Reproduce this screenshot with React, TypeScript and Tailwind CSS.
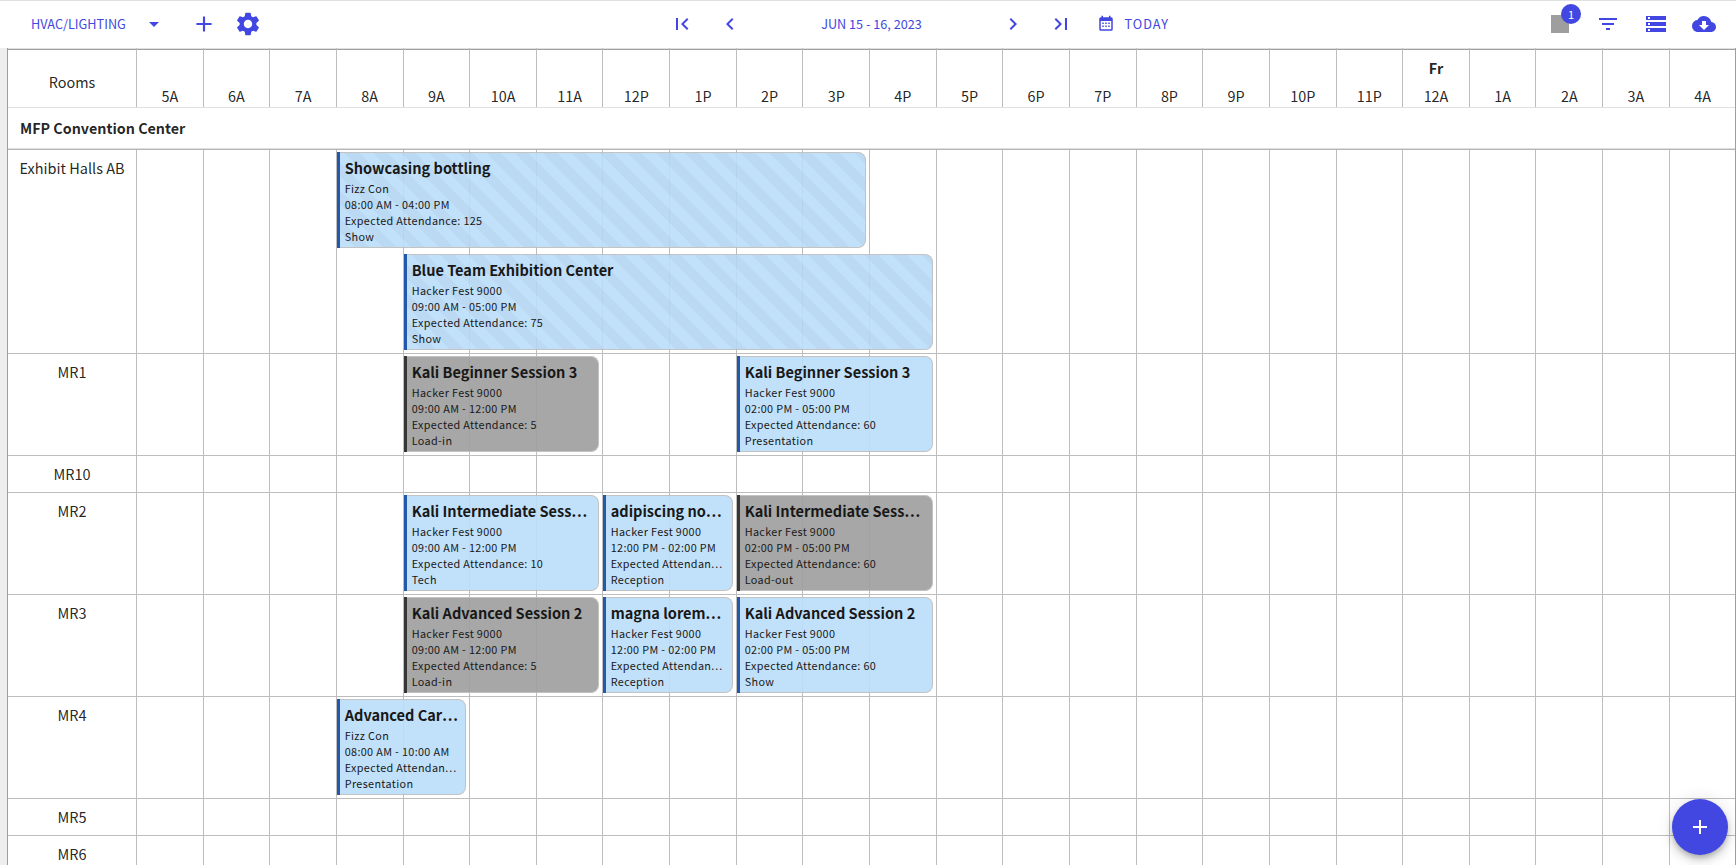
import React, { FC } from 'react'
import {
  MdAdd,
  MdArrowDropDown,
  MdChevronLeft,
  MdChevronRight,
  MdCloudDownload,
  MdFilterList,
  MdFirstPage,
  MdLastPage,
  MdSettings,
  MdSquare,
  MdStorage,
} from 'react-icons/md'

const HOUR = 66.64

const App: FC = () => {
  return (
    <div className="h-[865px] w-full overflow-hidden bg-white font-['Noto_Sans_CJK_SC',sans-serif] text-black/87">
      <Toolbar />
      <div className="flex h-[817px] overflow-hidden">
        <div className="w-[7px] shrink-0 bg-[#eeeeee]" />
        <div className="flex w-[1729px] shrink-0 flex-col border-x border-[#9e9e9e]">
          <TimeHeader />
          <div className="flex h-[42px] shrink-0 items-center border-b border-[#b5b5b5] pb-0.5 shadow-[inset_0_-1px_0_#e0e0e0]">
            <span className="pl-3 text-[14.3px] leading-5 font-bold">MFP Convention Center</span>
          </div>
          {rooms.map((room) => (
            <RoomRow key={room.name} room={room} />
          ))}
        </div>
      </div>
      <button className="fixed right-2 bottom-[10px] flex size-14 items-center justify-center rounded-full bg-[#4147e0] text-white shadow-[0_3px_5px_-1px_rgba(0,0,0,.2),0_6px_10px_0_rgba(0,0,0,.14),0_1px_18px_0_rgba(0,0,0,.12)]">
        <MdAdd size={24} />
      </button>
    </div>
  )
}

export default App

const Toolbar: FC = () => (
  <div className="flex h-12 items-center border-t border-[#e0e0e0] pb-px text-[12.7px] text-[#4147e0]">
    <span className="ml-[31px] w-[111px]">HVAC/LIGHTING</span>
    <MdArrowDropDown size={24} />
    <MdAdd size={26} className="ml-[25px]" />
    <MdSettings size={28} className="ml-[17px]" />
    <MdFirstPage size={24} className="ml-[408px]" />
    <MdChevronLeft size={24} className="ml-6" />
    <span className="w-[259px] text-center">JUN 15 - 16, 2023</span>
    <MdChevronRight size={24} />
    <MdLastPage size={24} className="ml-6" />
    <CalendarIcon />
    <span className="ml-[9.5px] tracking-[1px]">TODAY</span>
    <div className="relative ml-auto">
      <MdSquare size={24} className="text-[#9e9e9e]" />
      <span className="absolute -top-[8px] left-[13px] flex size-5 items-center justify-center rounded-full bg-[#4147e0] text-[11px] text-white">
        1
      </span>
    </div>
    <MdFilterList size={24} className="ml-6" />
    <MdStorage size={24} className="ml-6" />
    <MdCloudDownload size={24} className="mr-5 ml-6" />
  </div>
)

const CalendarIcon: FC = () => (
  <svg width="18" height="18" viewBox="0 0 24 24" fill="currentColor" className="ml-6">
    <path d="M9 10v2H7v-2h2m4 0v2h-2v-2h2m4 0v2h-2v-2h2m2-7a2 2 0 0 1 2 2v14a2 2 0 0 1-2 2H5a2 2 0 0 1-2-2V5a2 2 0 0 1 2-2h1V1h2v2h8V1h2v2h1m0 16V8H5v11h14M9 14v2H7v-2h2m4 0v2h-2v-2h2m4 0v2h-2v-2h2z" />
  </svg>
)

const TimeHeader: FC = () => (
  <div className="flex h-[60px] shrink-0 border-b border-[#e0e0e0] shadow-[inset_0_1px_0_#e0e0e0,inset_0_2px_0_#9e9e9e] text-[14.4px]">
    <div className="w-32 shrink-0 pt-6 text-center leading-5">Rooms</div>
    {hours.map((hour, i) => (
      <div
        key={i}
        className="flex w-[66.641px] shrink-0 flex-col items-center justify-end border-l border-[#bdbdbd] pb-px leading-5"
      >
        {hour === '12A' && <span className="mb-2 font-bold">Fr</span>}
        <span>{hour}</span>
      </div>
    ))}
  </div>
)

const RoomRow: FC<{ room: Room }> = ({ room }) => {
  const lanes = Math.max(0, ...room.events.map((event) => (event.lane ?? 0) + 1))
  return (
    <div
      className="relative flex shrink-0 border-b border-[#bdbdbd]"
      style={{ height: lanes ? lanes * 102 : 37 }}
    >
      <div className="w-32 shrink-0 pt-2 text-center text-[14.5px] leading-5">{room.name}</div>
      {hours.map((_, i) => (
        <div key={i} className="w-[66.641px] shrink-0 border-l border-[#bdbdbd]" />
      ))}
      {room.events.map((event) => (
        <EventCard key={event.start} event={event} />
      ))}
    </div>
  )
}

// x of the grid line that opens the given hour, inside a row
const hourLine = (hour: number) => Math.round(128 + (hour - 5) * HOUR)

const EventCard: FC<{ event: RoomEvent }> = ({ event }) => (
  <div
    className="absolute flex h-24 text-[10.8px] leading-4 tracking-[.36px] text-black opacity-90"
    style={{
      left: hourLine(event.start) + 1,
      width: hourLine(event.end) - hourLine(event.start) - 4,
      top: 2 + (event.lane ?? 0) * 102,
    }}
  >
    <div className={`w-[3px] shrink-0 ${event.muted ? 'bg-[#212121]' : 'bg-[#0d47a1]'}`} />
    <div
      className={`min-w-0 flex-1 rounded-r-lg border border-l-0 border-[#bdbdbd] pt-1 pl-[4.7px] whitespace-nowrap ${
        event.muted ? 'bg-[#9e9e9e]' : 'bg-[#bbdefb]'
      } ${
        event.striped
          ? 'bg-[repeating-linear-gradient(45deg,transparent,transparent_10px,rgba(0,0,0,.04)_10px,rgba(0,0,0,.04)_20px)]'
          : ''
      }`}
    >
      <p className="mb-px text-[14.55px] leading-[22px] font-bold tracking-normal">
        {event.title}
        {event.cut && <span className="tracking-[.8px]">...</span>}
      </p>
      <p>{event.client}</p>
      <p>{event.time}</p>
      {event.end - event.start > 2 ? (
        <p>Expected Attendance: {event.attendance}</p>
      ) : (
        <p>
          Expected Attendan<span className="tracking-[1px]">...</span>
        </p>
      )}
      <p>{event.type}</p>
    </div>
  </div>
)

type RoomEvent = {
  title: string
  client: string
  time: string
  start: number
  end: number
  attendance?: number
  type: string
  lane?: number
  striped?: boolean
  muted?: boolean
  cut?: boolean
}

type Room = {
  name: string
  events: RoomEvent[]
}

const hours = [
  '5A', '6A', '7A', '8A', '9A', '10A', '11A', '12P', '1P', '2P', '3P', '4P',
  '5P', '6P', '7P', '8P', '9P', '10P', '11P', '12A', '1A', '2A', '3A', '4A',
]

const rooms: Room[] = [
  {
    name: 'Exhibit Halls AB',
    events: [
      { title: 'Showcasing bottling', client: 'Fizz Con', time: '08:00 AM - 04:00 PM', start: 8, end: 16, attendance: 125, type: 'Show', striped: true },
      { title: 'Blue Team Exhibition Center', client: 'Hacker Fest 9000', time: '09:00 AM - 05:00 PM', start: 9, end: 17, attendance: 75, type: 'Show', striped: true, lane: 1 },
    ],
  },
  {
    name: 'MR1',
    events: [
      { title: 'Kali Beginner Session 3', client: 'Hacker Fest 9000', time: '09:00 AM - 12:00 PM', start: 9, end: 12, attendance: 5, type: 'Load-in', muted: true },
      { title: 'Kali Beginner Session 3', client: 'Hacker Fest 9000', time: '02:00 PM - 05:00 PM', start: 14, end: 17, attendance: 60, type: 'Presentation' },
    ],
  },
  { name: 'MR10', events: [] },
  {
    name: 'MR2',
    events: [
      { title: 'Kali Intermediate Sess', cut: true, client: 'Hacker Fest 9000', time: '09:00 AM - 12:00 PM', start: 9, end: 12, attendance: 10, type: 'Tech' },
      { title: 'adipiscing no', cut: true, client: 'Hacker Fest 9000', time: '12:00 PM - 02:00 PM', start: 12, end: 14, type: 'Reception' },
      { title: 'Kali Intermediate Sess', cut: true, client: 'Hacker Fest 9000', time: '02:00 PM - 05:00 PM', start: 14, end: 17, attendance: 60, type: 'Load-out', muted: true },
    ],
  },
  {
    name: 'MR3',
    events: [
      { title: 'Kali Advanced Session 2', client: 'Hacker Fest 9000', time: '09:00 AM - 12:00 PM', start: 9, end: 12, attendance: 5, type: 'Load-in', muted: true },
      { title: 'magna lorem', cut: true, client: 'Hacker Fest 9000', time: '12:00 PM - 02:00 PM', start: 12, end: 14, type: 'Reception' },
      { title: 'Kali Advanced Session 2', client: 'Hacker Fest 9000', time: '02:00 PM - 05:00 PM', start: 14, end: 17, attendance: 60, type: 'Show' },
    ],
  },
  {
    name: 'MR4',
    events: [
      { title: 'Advanced Car', cut: true, client: 'Fizz Con', time: '08:00 AM - 10:00 AM', start: 8, end: 10, type: 'Presentation' },
    ],
  },
  { name: 'MR5', events: [] },
  { name: 'MR6', events: [] },
]
